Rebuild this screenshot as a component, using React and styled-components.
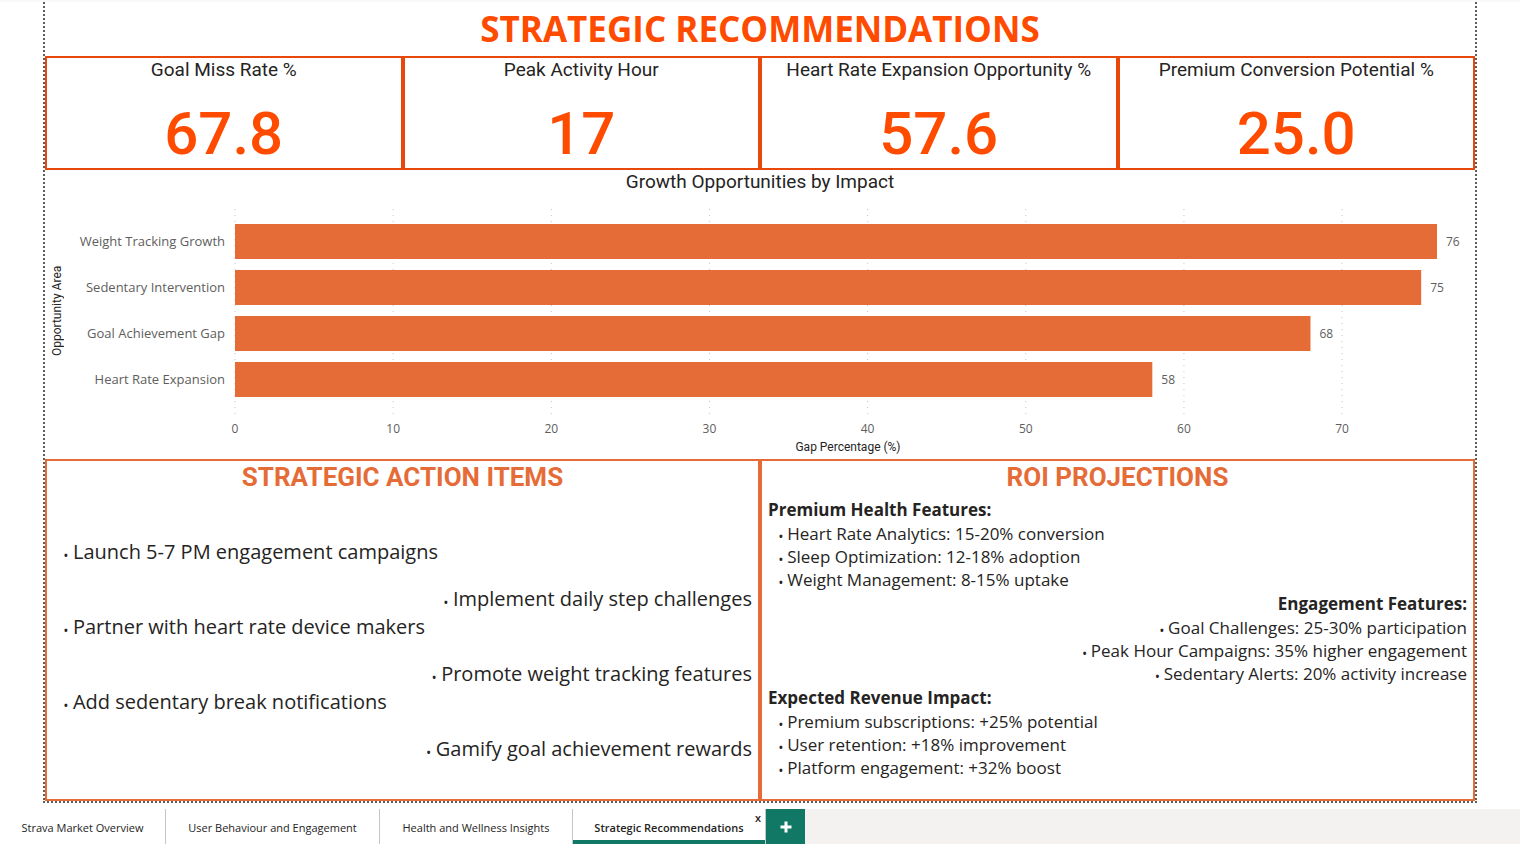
import React from "react";
import styled, { createGlobalStyle } from "styled-components";

const din = `"Roboto", "Liberation Sans", sans-serif`;
const segoe = `"Open Sans", "Noto Sans", sans-serif`;
const brand = "#ff4b00";
const orange = "#e66c37";

const GlobalStyle = createGlobalStyle`
  *, *::before, *::after { box-sizing: border-box; }
  body { margin: 0; background: #fff; color: #252423; font-family: ${segoe}; }
  h1, h2, h3, p, ul, dl, dd { margin: 0; padding: 0; }
  ul { list-style: none; }
  button { font: inherit; border: 0; padding: 0; background: none; color: inherit; cursor: pointer; }
`;

const Page = styled.div`
  min-height: 100vh;
  display: flex;
  flex-direction: column;
  border-top: 2px solid #f9f9f9;
`;

const dots = "#605e5c 0 2px, transparent 2px 4px";

const Canvas = styled.main`
  flex: 1;
  display: flex;
  flex-direction: column;
  margin: 0 43px 6px;
  padding: 0 2px 2px;
  background:
    repeating-linear-gradient(to bottom, ${dots}) left top / 2px 100% no-repeat,
    repeating-linear-gradient(to bottom, ${dots}) right top / 2px 100% no-repeat,
    repeating-linear-gradient(to right, ${dots}) left bottom / 100% 2px no-repeat;
`;

const Title = styled.h1`
  color: ${brand};
  font-size: 35px;
  line-height: 54px;
  font-weight: 700;
  text-align: center;
`;

const Cards = styled.dl`
  display: grid;
  grid-template-columns: repeat(4, 1fr);
`;

const Card = styled.div`
  border: 2px solid #e8480c;
  height: 114px;
  display: flex;
  flex-direction: column;
  align-items: center;
  font-family: ${din};
`;

const CardLabel = styled.dt`
  font-size: 19px;
  line-height: 24px;
  white-space: nowrap;
`;

const CardValue = styled.dd`
  color: ${brand};
  font-size: 60px;
  font-weight: 500;
  line-height: 72px;
  padding-top: 16px;
`;

const ChartSection = styled.section`
  height: 289px;
`;

const ChartTitle = styled.h2`
  font-family: ${din};
  font-size: 19px;
  font-weight: 400;
  line-height: 24px;
  text-align: center;
`;

const ChartBody = styled.div`
  display: flex;
  padding: 15px 38px 0 0;
`;

const AxisTitle = styled.div`
  width: 24px;
  height: 204px;
  writing-mode: vertical-rl;
  transform: rotate(180deg);
  text-align: center;
  line-height: 24px;
  font-family: ${din};
  font-size: 12px;
`;

const Plot = styled.svg`
  flex: 1;
  min-width: 0;
  height: 248px;
  margin-left: 166px;
  overflow: visible;
  font-family: ${segoe};
  font-size: 12px;
  fill: #605e5c;
`;

const Category = styled.text`
  font-size: 13px;
  text-anchor: end;
`;

const ValueAxisTitle = styled.text`
  fill: #252423;
  font-family: ${din};
  text-anchor: middle;
`;

const Panels = styled.div`
  flex: 1;
  display: grid;
  grid-template-columns: 1fr 1fr;
`;

const Panel = styled.section`
  border: 2px solid ${orange};
  padding: 0 6px;
`;

const PanelTitle = styled.h2`
  color: ${orange};
  font-family: ${din};
  font-size: 26px;
  font-weight: 700;
  line-height: 32px;
  text-align: center;
`;

const Actions = styled.ul`
  padding: 45px 0 0 11px;
  font-size: 20px;
  line-height: 28px;
`;

const Action = styled.li`
  text-align: ${(p) => (p.$right ? "right" : "left")};
  padding-bottom: ${(p) => (p.$right ? "0" : "19px")};
`;

const Group = styled.div`
  text-align: ${(p) => (p.$right ? "right" : "left")};
  font-size: 17px;
  line-height: 23px;
  &:first-of-type { padding-top: 4px; }
`;

const GroupTitle = styled.h3`
  font-size: 17px;
  font-weight: 700;
  line-height: 25px;
`;

const GroupList = styled.ul`
  padding-left: ${(p) => (p.$right ? "0" : "11px")};
`;

const Bullet = styled.span`
  font-size: 10px;
  font-weight: 700;
  line-height: 1;
`;

const TabBar = styled.nav`
  display: flex;
  height: 35px;
  background: #f3f2f1;
  font-size: 11px;
`;

const TabCell = styled.div`
  position: relative;
  display: flex;
  background: #fff;
  width: ${(p) => p.$width}px;
  border-right: 1px solid #c8c6c4;
`;

const Tab = styled.button`
  flex: 1;
  white-space: nowrap;
  font-weight: ${(p) => (p.$active ? 600 : 400)};
  border-bottom: ${(p) => (p.$active ? "4px solid #117865" : "0")};
  padding-top: ${(p) => (p.$active ? "6px" : "2px")};
`;

const CloseTab = styled.button`
  position: absolute;
  top: 2px;
  right: 4px;
  font-weight: 600;
  line-height: 14px;
`;

const AddTab = styled.button`
  width: 39px;
  background: #117865;
  display: grid;
  place-items: center;
`;

const kpis = [
  ["Goal Miss Rate %", "67.8"],
  ["Peak Activity Hour", "17"],
  ["Heart Rate Expansion Opportunity %", "57.6"],
  ["Premium Conversion Potential %", "25.0"],
];

const bars = [
  ["Weight Tracking Growth", 76],
  ["Sedentary Intervention", 75],
  ["Goal Achievement Gap", 68],
  ["Heart Rate Expansion", 58],
];

const ticks = [0, 10, 20, 30, 40, 50, 60, 70];

const actions = [
  "Launch 5-7 PM engagement campaigns",
  "Implement daily step challenges",
  "Partner with heart rate device makers",
  "Promote weight tracking features",
  "Add sedentary break notifications",
  "Gamify goal achievement rewards",
];

const groups = [
  ["Premium Health Features:", [
    "Heart Rate Analytics: 15-20% conversion",
    "Sleep Optimization: 12-18% adoption",
    "Weight Management: 8-15% uptake",
  ]],
  ["Engagement Features:", [
    "Goal Challenges: 25-30% participation",
    "Peak Hour Campaigns: 35% higher engagement",
    "Sedentary Alerts: 20% activity increase",
  ]],
  ["Expected Revenue Impact:", [
    "Premium subscriptions: +25% potential",
    "User retention: +18% improvement",
    "Platform engagement: +32% boost",
  ]],
];

const tabs = [
  ["Strava Market Overview", 166],
  ["User Behaviour and Engagement", 214],
  ["Health and Wellness Insights", 193],
  ["Strategic Recommendations", 193],
];

const pct = (v) => `${(v / 76) * 100}%`;

function GrowthChart() {
  return (
    <ChartSection>
      <ChartTitle>Growth Opportunities by Impact</ChartTitle>
      <ChartBody>
        <AxisTitle>Opportunity Area</AxisTitle>
        <Plot role="img" aria-label="Growth Opportunities by Impact">
          {ticks.map((t) => (
            <g key={t}>
              <line x1={pct(t)} x2={pct(t)} y1="0" y2="209" stroke="#c8c6c4" strokeDasharray="1 5" />
              <text x={pct(t)} y="224" textAnchor="middle">{t}</text>
            </g>
          ))}
          {bars.map(([name, value], i) => (
            <g key={name}>
              <rect x="0" y={15 + i * 46} width={pct(value)} height="35" fill={orange} />
              <Category x="-10" y={37 + i * 46}>{name}</Category>
              <text x={pct(value)} dx="9" y={37 + i * 46}>{value}</text>
            </g>
          ))}
          <ValueAxisTitle x="50%" dx="12" y="242">Gap Percentage (%)</ValueAxisTitle>
        </Plot>
      </ChartBody>
    </ChartSection>
  );
}

export default function App() {
  return (
    <>
      <GlobalStyle />
      <Page>
        <Canvas>
          <Title>STRATEGIC RECOMMENDATIONS</Title>
          <Cards>
            {kpis.map(([label, value]) => (
              <Card key={label}>
                <CardLabel>{label}</CardLabel>
                <CardValue>{value}</CardValue>
              </Card>
            ))}
          </Cards>
          <GrowthChart />
          <Panels>
            <Panel>
              <PanelTitle>STRATEGIC ACTION ITEMS</PanelTitle>
              <Actions>
                {actions.map((text, i) => (
                  <Action key={text} $right={i % 2 === 1}>
                    <Bullet>•</Bullet> {text}
                  </Action>
                ))}
              </Actions>
            </Panel>
            <Panel>
              <PanelTitle>ROI PROJECTIONS</PanelTitle>
              {groups.map(([title, items], i) => (
                <Group key={title} $right={i === 1}>
                  <GroupTitle>{title}</GroupTitle>
                  <GroupList $right={i === 1}>
                    {items.map((text) => (
                      <li key={text}><Bullet>•</Bullet> {text}</li>
                    ))}
                  </GroupList>
                </Group>
              ))}
            </Panel>
          </Panels>
        </Canvas>
        <TabBar aria-label="Report pages">
          {tabs.map(([name, width], i) => (
            <TabCell key={name} $width={width}>
              <Tab type="button" $active={i === 3}>{name}</Tab>
              {i === 3 && <CloseTab type="button" aria-label="Close Strategic Recommendations">x</CloseTab>}
            </TabCell>
          ))}
          <AddTab type="button" aria-label="New page">
            <svg width="12" height="12" viewBox="0 0 12 12">
              <path d="M4.5 0.5h3v4h4v3h-4v4h-3v-4h-4v-3h4z" fill="#fff" />
            </svg>
          </AddTab>
        </TabBar>
      </Page>
    </>
  );
}
